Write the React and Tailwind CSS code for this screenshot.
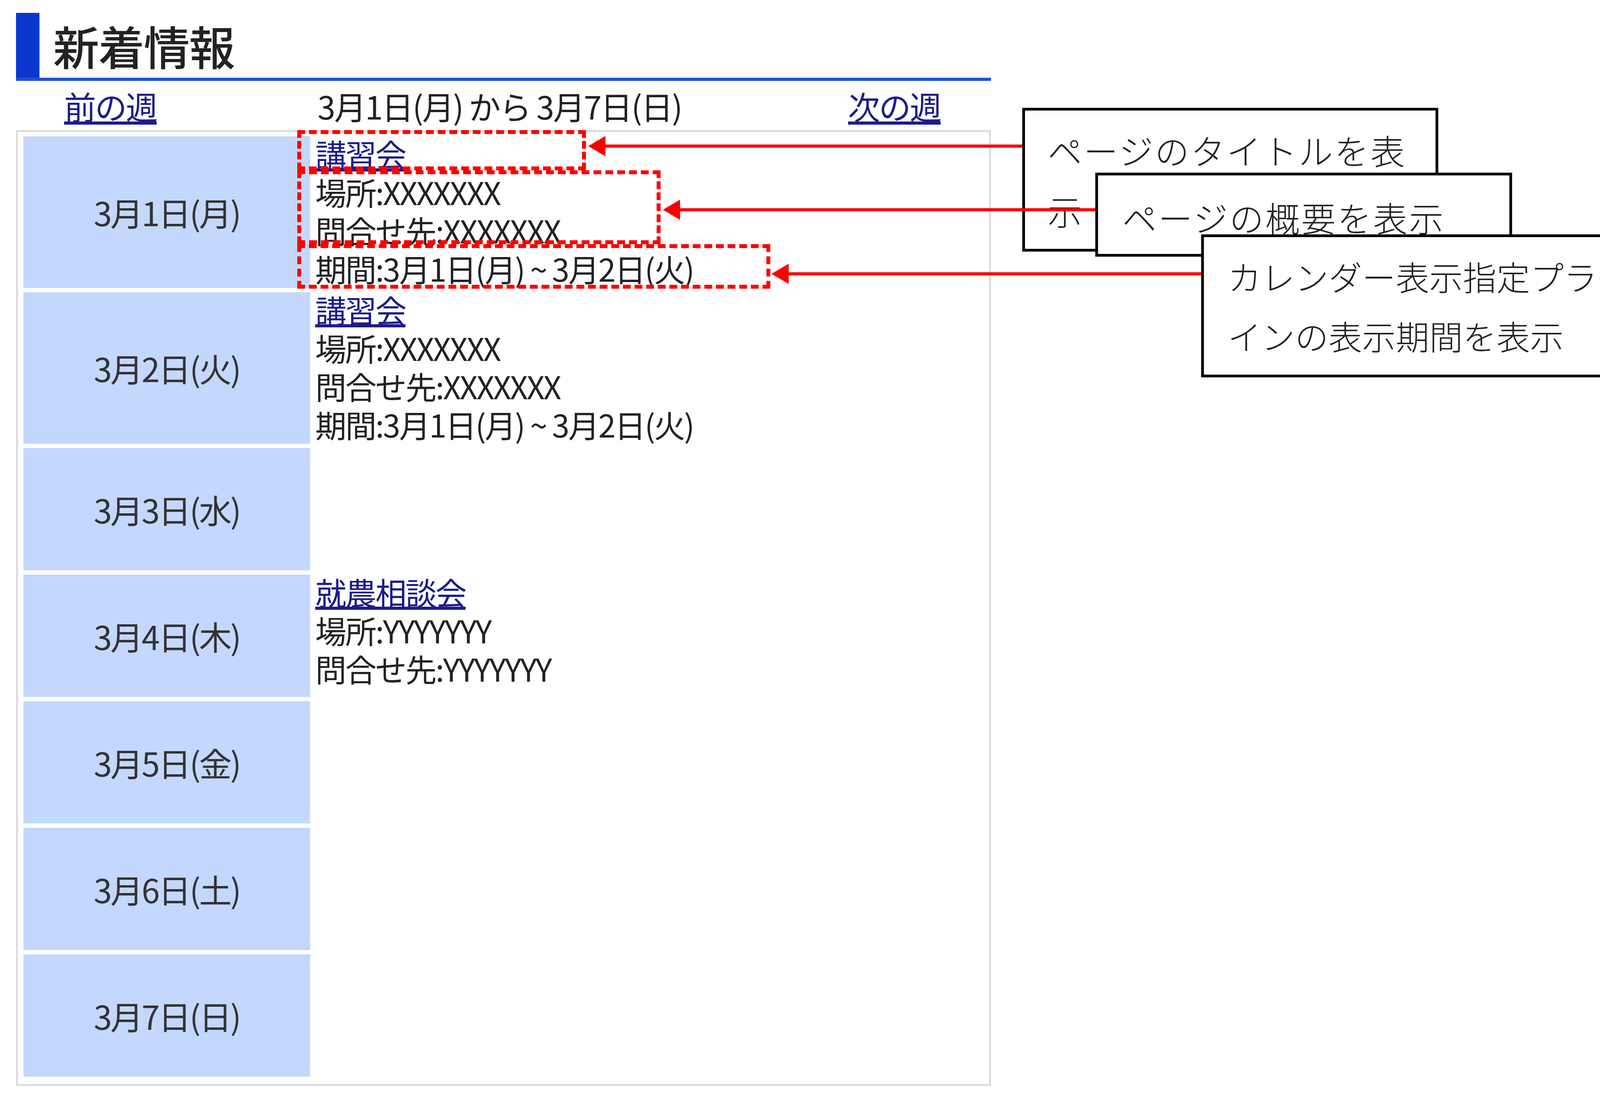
export default function App() {
  const jp = { fontFamily: '"Noto Sans CJK JP", "Noto Sans", sans-serif' };
  const rows = [
    { d: "3月1日(月)", h: "h-[388px]", items: ["講習会", "場所:XXXXXXX", "問合せ先:XXXXXXX", "期間:3月1日(月) ~ 3月2日(火)"] },
    { d: "3月2日(火)", h: "h-[388px]", items: ["講習会", "場所:XXXXXXX", "問合せ先:XXXXXXX", "期間:3月1日(月) ~ 3月2日(火)"] },
    { d: "3月3日(水)", h: "h-[313px]", items: [] },
    { d: "3月4日(木)", h: "h-[313px]", items: ["就農相談会", "場所:YYYYYYY", "問合せ先:YYYYYYY"] },
    { d: "3月5日(金)", h: "h-[313px]", items: [] },
    { d: "3月6日(土)", h: "h-[313px]", items: [] },
    { d: "3月7日(日)", h: "h-[313px]", items: [] },
  ];
  return (
    <div className="relative w-[4277px] h-[2803px] bg-white overflow-hidden text-[#222]" style={jp}>
      <div className="ml-[41px] pt-[33px] w-[2496px]">
        <div className="flex items-end border-b-[8px] border-[#1f4fd8]">
          <div className="w-[60px] h-[166px] bg-[#0a36d0]" />
          <div className="ml-[35px] text-[118px] leading-[166px] font-medium tracking-[-2px]">新着情報</div>
        </div>
        <div className="grid grid-cols-[649px_1358px_1fr] pl-[123px] h-[126px] items-center text-[82px] tracking-[-3px]">
          <span className="text-[#1c1c8a] underline">前の週</span>
          <span>3月1日(月) から 3月7日(日)</span>
          <span className="text-[#1c1c8a] underline">次の週</span>
        </div>
        <div className="h-[2447px] border-[5px] border-[#dcdcdc] pl-[14px] pt-[11px] flex flex-col gap-[11px]">
          {rows.map((r, i) => (
            <div key={i} className={`flex gap-[13px] ${r.h}`}>
              <div className="w-[734px] h-full bg-[#c3d8fc] flex items-center justify-center text-[84px] tracking-[-4px] text-[#333]">{r.d}</div>
              <div className="-mt-[6px] text-[80px] leading-[98px] tracking-[-3px] whitespace-nowrap">
                {r.items.map((t, j) => (
                  <div key={j} className={j === 0 ? "text-[#1c1c8a] underline" : ""}>{t}</div>
                ))}
              </div>
            </div>
          ))}
        </div>
      </div>

      <div className="absolute left-[761px] top-[333px] w-[739px] h-[103px] border-[10px] border-dashed border-[#f00]" />
      <div className="absolute left-[761px] top-[436px] w-[930px] h-[189px] border-[10px] border-dashed border-[#f00]" />
      <div className="absolute left-[761px] top-[625px] w-[1211px] h-[114px] border-[10px] border-dashed border-[#f00]" />

      <div className="absolute left-[2617px] top-[276px] w-[1065px] h-[368px] border-[7px] border-black bg-white pl-[58px] pt-[22px] text-[88px] leading-[155px] font-light tracking-[4px] whitespace-nowrap">
        ページのタイトルを表<br />示
      </div>
      <div className="absolute left-[2804px] top-[442px] w-[1067px] h-[215px] border-[7px] border-black bg-white pl-[62px] pt-[28px] text-[88px] leading-[155px] font-light tracking-[4px] whitespace-nowrap">
        ページの概要を表示
      </div>
      <div className="absolute left-[3075px] top-[600px] w-[1186px] h-[366px] border-[7px] border-black bg-white pl-[61px] pt-[24px] text-[86px] leading-[152px] font-light whitespace-nowrap">
        カレンダー表示指定プラグ<br />インの表示期間を表示
      </div>

      <svg className="absolute left-0 top-0" width="4277" height="2803">
        <g fill="#f00" stroke="none">
          <rect x="1540" y="370" width="1077" height="8" />
          <polygon points="1506,374 1550,348 1550,400" />
          <rect x="1730" y="533" width="1074" height="8" />
          <polygon points="1697,537 1741,511 1741,563" />
          <rect x="2010" y="697" width="1065" height="8" />
          <polygon points="1975,701 2019,675 2019,727" />
        </g>
      </svg>
    </div>
  );
}
